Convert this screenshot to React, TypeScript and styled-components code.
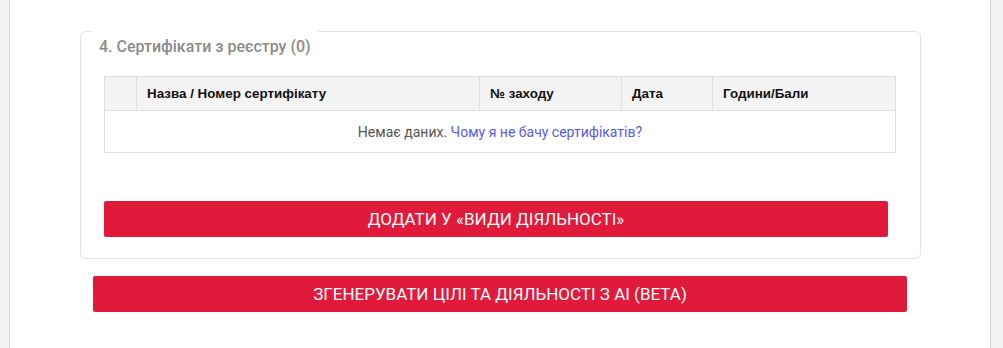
import React from 'react';
import styled, { createGlobalStyle } from 'styled-components';

const GlobalStyle = createGlobalStyle`
  html, body {
    margin: 0;
    padding: 0;
    background: #ffffff;
  }
  body {
    font-family: Roboto, 'Liberation Sans', Arial, sans-serif;
  }
`;

type Column = {
  title: string;
  width: number;
};

const columns: Column[] = [
  { title: '', width: 32 },
  { title: 'Назва / Номер сертифікату', width: 343 },
  { title: '№ заходу', width: 142 },
  { title: 'Дата', width: 91 },
  { title: 'Години/Бали', width: 183 },
];

export default function App() {
  return (
    <>
      <GlobalStyle />
      <Page>
        <Rail side="left" />
        <Content>
          <Section>
            <Legend>4. Сертифікати з реєстру (0)</Legend>
            <Table>
              <colgroup>
                {columns.map((c, i) => (
                  <col key={i} style={{ width: c.width }} />
                ))}
              </colgroup>
              <thead>
                <tr>
                  {columns.map((c, i) => (
                    <Th key={i}>{c.title}</Th>
                  ))}
                </tr>
              </thead>
              <tbody>
                <tr>
                  <EmptyCell colSpan={columns.length}>
                    Немає даних. <Link href="#">Чому я не бачу сертифікатів?</Link>
                  </EmptyCell>
                </tr>
              </tbody>
            </Table>
            <RedButton width={784} inset={48}>
              Додати у «види діяльності»
            </RedButton>
          </Section>
          <RedButton width={814} inset={17} centered>
            Згенерувати цілі та діяльності з AI (Beta)
          </RedButton>
        </Content>
        <Rail side="right" />
      </Page>
    </>
  );
}

const Page = styled.div`
  display: flex;
  width: 1003px;
  height: 348px;
  overflow: hidden;
`;

const Rail = styled.div<{ side: 'left' | 'right' }>`
  flex: none;
  width: ${(p) => (p.side === 'left' ? '9px' : '12px')};
  background: #f3f3f5;
  ${(p) =>
    p.side === 'left' ? 'border-right: 1px solid #dcdcdc;' : 'border-left: 1px solid #d6d6d6;'}
`;

const Content = styled.div`
  flex: 1;
  display: flex;
  flex-direction: column;
  padding-top: 6px;
`;

const Section = styled.fieldset`
  box-sizing: border-box;
  width: 841px;
  margin: 0 0 0 70px;
  padding: 0 25px 21px 23px;
  border: 1px solid #e2e2e2;
  border-radius: 6px;
  min-width: 0;
`;

const Legend = styled.legend`
  margin-left: -12px;
  padding: 32px 7px 0 7px;
  font-size: 16px;
  font-weight: 500;
  line-height: 18px;
  color: #8b8b8b;
`;

const Table = styled.table`
  width: 791px;
  margin-top: 20px;
  border-collapse: collapse;
  table-layout: fixed;
  border: 1px solid #dedede;
`;

const Th = styled.th`
  height: 33px;
  padding: 0 10px;
  background: #f4f4f4;
  border: 1px solid #dedede;
  text-align: left;
  font-family: 'Liberation Sans', Arial, sans-serif;
  font-size: 13.4px;
  font-weight: bold;
  color: #111;
  white-space: nowrap;
`;

const EmptyCell = styled.td`
  height: 41px;
  padding: 0 10px;
  text-align: center;
  font-size: 14px;
  color: #555;
`;

const Link = styled.a`
  color: #5a5ae8;
  text-decoration: none;
`;

const RedButton = styled.button<{ width: number; inset: number; centered?: boolean }>`
  display: block;
  box-sizing: border-box;
  width: ${(p) => p.width}px;
  height: 36px;
  margin: ${(p) => p.inset}px 0 0 ${(p) => (p.centered ? '83px' : '0')};
  padding: 0;
  border: none;
  border-radius: 2px;
  background: #e1193a;
  color: #ffffff;
  font-family: Roboto, 'Liberation Sans', Arial, sans-serif;
  font-size: 17px;
  font-weight: 400;
  text-transform: uppercase;
  cursor: pointer;
`;
